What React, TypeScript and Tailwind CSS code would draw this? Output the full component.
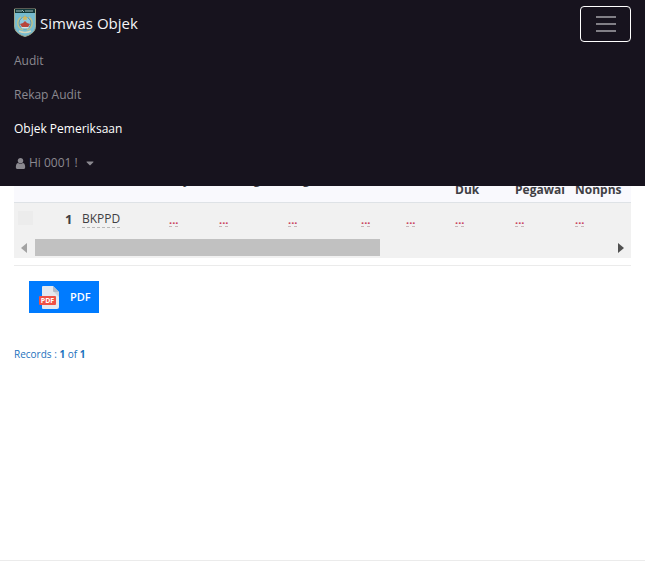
import React from 'react';
import { FaCaretDown } from 'react-icons/fa';

const columns = [
  { label: 'Layanan', width: 'w-[50px]' },
  { label: 'Bidang', width: 'w-[69px]' },
  { label: 'Pegawai', width: 'w-[73px]' },
  { label: '', width: 'w-[45px]' },
  { label: '', width: 'w-[49px]' },
  { label: 'Duk', width: 'w-[60px]', low: true },
  { label: 'Pegawai', width: 'w-[60px]', low: true },
  { label: 'Nonpns', width: 'w-auto', low: true },
];

const links = [
  { label: 'Audit', active: false },
  { label: 'Rekap Audit', active: false },
  { label: 'Objek Pemeriksaan', active: true },
];

const Logo: React.FC = () => (
  <svg className="h-[29px] w-[22px]" viewBox="0 0 22 29" aria-hidden="true">
    <path d="M.5 1h21v17c0 5-3.500 8.500-10.500 10.500C4 26.500.5 23 .5 18z" fill="#76bcd0" stroke="#a3a78a" />
    <path d="M1 1h20v4H1z" fill="#123a3c" />
    <path d="M3 2v2M5 2v2M7 2v2M8 2l2 2M12 2v2M14 2v2M16 2v2M18 2v2" stroke="#c9dfdc" strokeWidth=".8" />
    <circle cx="11" cy="15" r="6" fill="#8fc9df" stroke="#5b93a8" />
    <path d="M7 9c-5 4-4 11 2 13M15 9c5 4 4 11-2 13" fill="none" stroke="#c9c17c" strokeWidth="1.200" />
    <path d="M11 7l1 2 2 .2-1.500 1.300.5 2-2-1-2 1 .5-2L8 9.200l2-.2z" fill="#d3b65c" />
    <path d="M6 16l3-1 2-2 2 2 3 1-2 3H8z" fill="#b8453b" />
    <path d="M7 19h8l-1 1.500H8z" fill="#d8e7e3" />
    <path d="M5 23c4 2 8 2 12 0" fill="none" stroke="#d5d8bd" strokeWidth="1.500" />
  </svg>
);

const UserIcon: React.FC = () => (
  <svg className="mr-0.5 h-[13px] w-[13px]" viewBox="128 0 1536 1792" fill="currentColor" aria-hidden="true">
    <path d="M1536 1399q0 109-62.500 187t-150.500 78h-854q-88 0-150.500-78t-62.500-187q0-85 8.500-160.500t31.500-152 58.500-131 94-89 134.500-34.500q131 128 313 128t313-128q76 0 134.500 34.500t94 89 58.500 131 31.500 152 8.500 160.500zm-256-887q0 159-112.500 271.500t-271.500 112.500-271.500-112.500-112.500-271.500 112.500-271.500 271.500-112.500 271.500 112.500 112.500 271.500z" />
  </svg>
);

const PdfIcon: React.FC = () => (
  <svg className="h-[23px] w-[21px]" viewBox="0 0 21 23" aria-hidden="true">
    <path d="M4 0h10l6 6v15a2 2 0 0 1-2 2H4a1 1 0 0 1-1-1V1a1 1 0 0 1 1-1z" fill="#e4e8ef" />
    <path d="M14 0l6 6h-5a1 1 0 0 1-1-1z" fill="#b2bac8" />
    <path d="M15 6h5v5z" fill="#cbd2dd" />
    <rect y="10" width="17" height="9" rx="1" fill="#ef5145" />
    <text x="8.500" y="17" textAnchor="middle" fontFamily="Open Sans, sans-serif" fontSize="7" fontWeight="700" fill="#fff">PDF</text>
  </svg>
);

const App: React.FC = () => {
  return (
    <div className="min-h-screen bg-white font-['Open_Sans',sans-serif] text-[#3f3f44]">
      {/* Navbar */}
      <nav className="fixed inset-x-0 top-0 z-10 h-[186px] bg-[#17131e] px-3.5 pt-1.5">
        <div className="flex items-start justify-between">
          <a href="#" className="flex items-center gap-1 pt-0.5 text-[15px] leading-7 text-[#f4f4f6]">
            <Logo />
            Simwas Objek
          </a>
          <button
            type="button"
            aria-label="Toggle navigation"
            className="flex h-9 w-[51px] flex-col items-center justify-center gap-[5px] rounded border border-white"
          >
            <span className="h-0.5 w-5 bg-[#817f86]" />
            <span className="h-0.5 w-5 bg-[#817f86]" />
            <span className="h-0.5 w-5 bg-[#817f86]" />
          </button>
        </div>
        <ul className="mt-0.5 text-xs">
          {links.map((link) => (
            <li key={link.label}>
              <a
                href="#"
                className={link.active ? 'block h-[34px] leading-[34px] text-white' : 'block h-[34px] leading-[34px] text-[#8b8990]'}
              >
                {link.label}
              </a>
            </li>
          ))}
          <li>
            <button type="button" className="flex h-[34px] items-center text-[#8b8990]">
              <UserIcon />
              Hi 0001 !
              <FaCaretDown className="ml-1.5 h-3 w-3" />
            </button>
          </li>
        </ul>
      </nav>

      {/* Table */}
      <main className="px-3.5 pt-[162px]">
        <div className="overflow-hidden bg-[#f1f1f1]">
          <table className="w-full table-fixed text-left text-xs">
            <thead>
              <tr className="h-10 border-b border-[#dee2e6] bg-[#f9f9fd] leading-5">
                <th className="w-[51px]" />
                <th className="w-[17px]" />
                <th className="w-[87px]" />
                {columns.map((col, i) => (
                  <th
                    key={i}
                    className={`${col.width} whitespace-nowrap p-0 align-bottom font-bold ${col.low ? 'pb-0.5' : 'pb-3'}`}
                  >
                    {col.label}
                  </th>
                ))}
              </tr>
            </thead>
            <tbody>
              <tr className="h-[35px]">
                <td className="pb-1 pl-1">
                  <input
                    type="checkbox"
                    aria-label="Pilih baris 1"
                    className="block h-3.5 w-[15px] appearance-none bg-[#ececec]"
                  />
                </td>
                <td className="text-[13px] font-bold">1</td>
                <td>
                  <a href="#" className="inline-block border-b border-dashed border-[#b8b8b8] leading-4">BKPPD</a>
                </td>
                {columns.map((_, i) => (
                  <td key={i}>
                    <a href="#" className="inline-block border-b border-dashed border-[#c9b5b9] text-[11px] font-bold leading-3 text-[#c9405a]">
                      ...
                    </a>
                  </td>
                ))}
              </tr>
            </tbody>
          </table>

          {/* Scrollbar */}
          <div className="flex h-[21px] items-center px-[7px]">
            <svg className="h-2.5 w-1.5" viewBox="0 0 6 10" aria-hidden="true">
              <path d="M6 0v10L0 5z" fill="#a3a3a3" />
            </svg>
            <div className="mx-2 flex-1">
              <div className="h-[17px] w-[60%] bg-[#c1c1c1]" />
            </div>
            <svg className="h-2.5 w-1.5" viewBox="0 0 6 10" aria-hidden="true">
              <path d="M0 0v10l6-5z" fill="#505050" />
            </svg>
          </div>
        </div>

        <hr className="mt-[7px] border-[#ebebeb]" />

        <button type="button" className="ml-[15px] mt-[15px] flex h-8 w-[70px] items-center gap-2.5 bg-[#007bff] pl-2.5 text-[11px] font-semibold text-white">
          <PdfIcon />
          PDF
        </button>

        <p className="mt-[33px] text-[10px] leading-4 text-[#1b72bd]">
          Records : <b>1</b> of <b>1</b>
        </p>
      </main>

      <footer className="mt-[198px] border-t border-[#ebebeb]" />
    </div>
  );
};

export default App;
